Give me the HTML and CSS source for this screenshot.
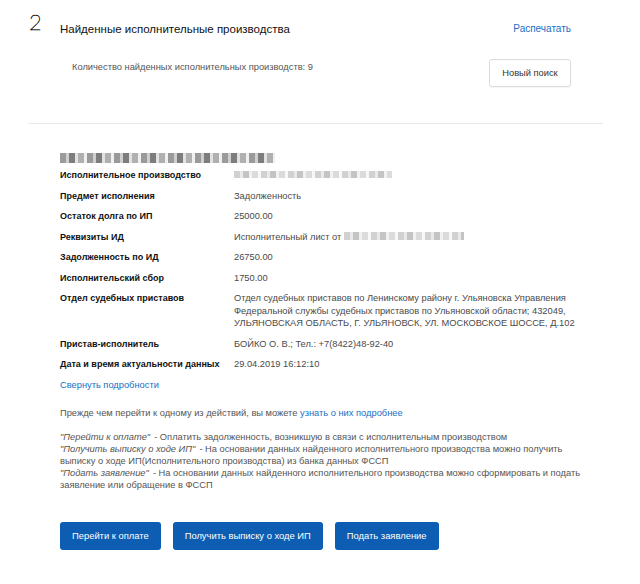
FILE: index.html
```html
<!DOCTYPE html>
<html lang="ru">
<head>
<meta charset="utf-8">
<title>Найденные исполнительные производства</title>
<link rel="stylesheet" href="styles.css">
</head>
<body>
<div class="page">
  <header class="head">
    <span class="step">2</span>
    <h2 class="title">Найденные исполнительные производства</h2>
    <a class="link print" href="#">Распечатать</a>
  </header>
  <div class="count-row">
    <p class="count">Количество найденных исполнительных производств: 9</p>
    <button class="btn-outline" type="button">Новый поиск</button>
  </div>
  <hr class="divider">
  <section class="details">
    <div class="blur blur-head"></div>
    <dl class="grid">
      <dt>Исполнительное производство</dt>
      <dd><span class="blur blur-val1"></span></dd>
      <dt>Предмет исполнения</dt>
      <dd>Задолженность</dd>
      <dt>Остаток долга по ИП</dt>
      <dd>25000.00</dd>
      <dt>Реквизиты ИД</dt>
      <dd>Исполнительный лист от <span class="blur blur-val2"></span></dd>
      <dt>Задолженность по ИД</dt>
      <dd>26750.00</dd>
      <dt>Исполнительский сбор</dt>
      <dd>1750.00</dd>
      <dt>Отдел судебных приставов</dt>
      <dd>Отдел судебных приставов по Ленинскому району г. Ульяновска Управления Федеральной службы судебных приставов по Ульяновской области; 432049, УЛЬЯНОВСКАЯ ОБЛАСТЬ, Г. УЛЬЯНОВСК, УЛ. МОСКОВСКОЕ ШОССЕ, Д.102</dd>
      <dt>Пристав-исполнитель</dt>
      <dd>БОЙКО О. В.; Тел.: +7(8422)48-92-40</dd>
      <dt>Дата и время актуальности данных</dt>
      <dd>29.04.2019 16:12:10</dd>
    </dl>
    <a class="link collapse" href="#">Свернуть подробности</a>
    <p class="intro">Прежде чем перейти к одному из действий, вы можете <a class="link" href="#">узнать о них подробнее</a></p>
    <div class="notes">
      <p><i>"Перейти к оплате"</i> - Оплатить задолженность, возникшую в связи с исполнительным производством</p>
      <p><i>"Получить выписку о ходе ИП"</i> - На основании данных найденного исполнительного производства можно получить выписку о ходе ИП(Исполнительного производства) из банка данных ФССП</p>
      <p><i>"Подать заявление"</i> - На основании данных найденного исполнительного производства можно сформировать и подать заявление или обращение в ФССП</p>
    </div>
    <div class="actions">
      <button class="btn" type="button">Перейти к оплате</button>
      <button class="btn" type="button">Получить выписку о ходе ИП</button>
      <button class="btn" type="button">Подать заявление</button>
    </div>
  </section>
</div>
</body>
</html>
```
FILE: styles.css
```css
* { box-sizing: border-box; }
html, body { margin: 0; padding: 0; background: #fff; }
body {
  font-family: "Liberation Sans", Arial, sans-serif;
  font-size: 9.3px;
  color: #222;
}
.page {
  width: 640px;
  padding: 0 37px 0 28px;
}
.link { color: #1a6fc4; text-decoration: none; }

.head {
  display: flex;
  align-items: flex-start;
  padding: 10px 32px 0 0;
  height: 48px;
}
.step {
  font-family: "Lato", sans-serif;
  font-weight: 100;
  font-size: 22px;
  line-height: 24px;
  width: 32px;
  padding-left: 1px;
  color: #000;
  -webkit-text-stroke: 0.45px #000;
}
.title {
  margin: 11px 0 0 0;
  font-size: 11.5px;
  line-height: 16px;
  font-weight: normal;
  color: #111;
  flex: 1;
}
.print {
  margin-top: 12px;
  font-size: 10px;
  line-height: 14px;
}

.count-row {
  display: flex;
  justify-content: space-between;
  align-items: flex-start;
  padding: 0 32px 0 44px;
  margin-top: 11px;
}
.count {
  margin: 1px 0 0;
  color: #555;
  line-height: 14px;
}
.btn-outline {
  font-family: inherit;
  font-size: 9.3px;
  color: #333;
  background: #fff;
  border: 1px solid #dcdcdc;
  border-radius: 3px;
  width: 82px;
  height: 28px;
  padding: 0;
  box-shadow: 0 1px 1px rgba(0,0,0,0.04);
}

.divider {
  border: 0;
  border-top: 1px solid #e8e8e8;
  margin: 36px 0 0;
  height: 0;
}

.details {
  padding: 29px 24px 0 32px;
}
.blur {
  display: inline-block;
  height: 9px;
  filter: blur(0.6px);
  background:
    repeating-linear-gradient(90deg, #9a9a9a 0 6px, #cfcfcf 6px 9px, #7d7d7d 9px 15px, #e2e2e2 15px 18px, #b0b0b0 18px 24px, #f0f0f0 24px 27px);
}
.blur-head { display: block; width: 215px; height: 10px; }
.blur-val1 { width: 158px; height: 7px; opacity: 0.45; vertical-align: middle; }
.blur-val2 { width: 120px; height: 8px; opacity: 0.45; vertical-align: middle; }

.grid {
  display: grid;
  grid-template-columns: 174px 1fr;
  row-gap: 8px;
  margin: 6px 0 0;
  line-height: 12.5px;
}
.grid dt {
  font-weight: bold;
  font-size: 9px;
  color: #111;
}
.grid dd {
  margin: 0;
  color: #4a4a4a;
}
.grid dd .blur { margin-top: -2px; }

.collapse {
  display: block;
  margin-top: 8px;
  line-height: 13px;
}
.intro {
  margin: 15px 0 0;
  color: #555;
  line-height: 13px;
}
.notes {
  margin: 11px -12px 0 0;
  color: #555;
  line-height: 12px;
}
.notes p { margin: 0; }
.notes i { padding-right: 1.5px; }

.actions {
  display: flex;
  gap: 12px;
  margin-top: 31px;
}
.btn {
  font-family: inherit;
  font-size: 9.4px;
  color: #fff;
  background: #0d5eb3;
  border: 0;
  border-radius: 3px;
  height: 28px;
  padding: 0 12px;
}
```
